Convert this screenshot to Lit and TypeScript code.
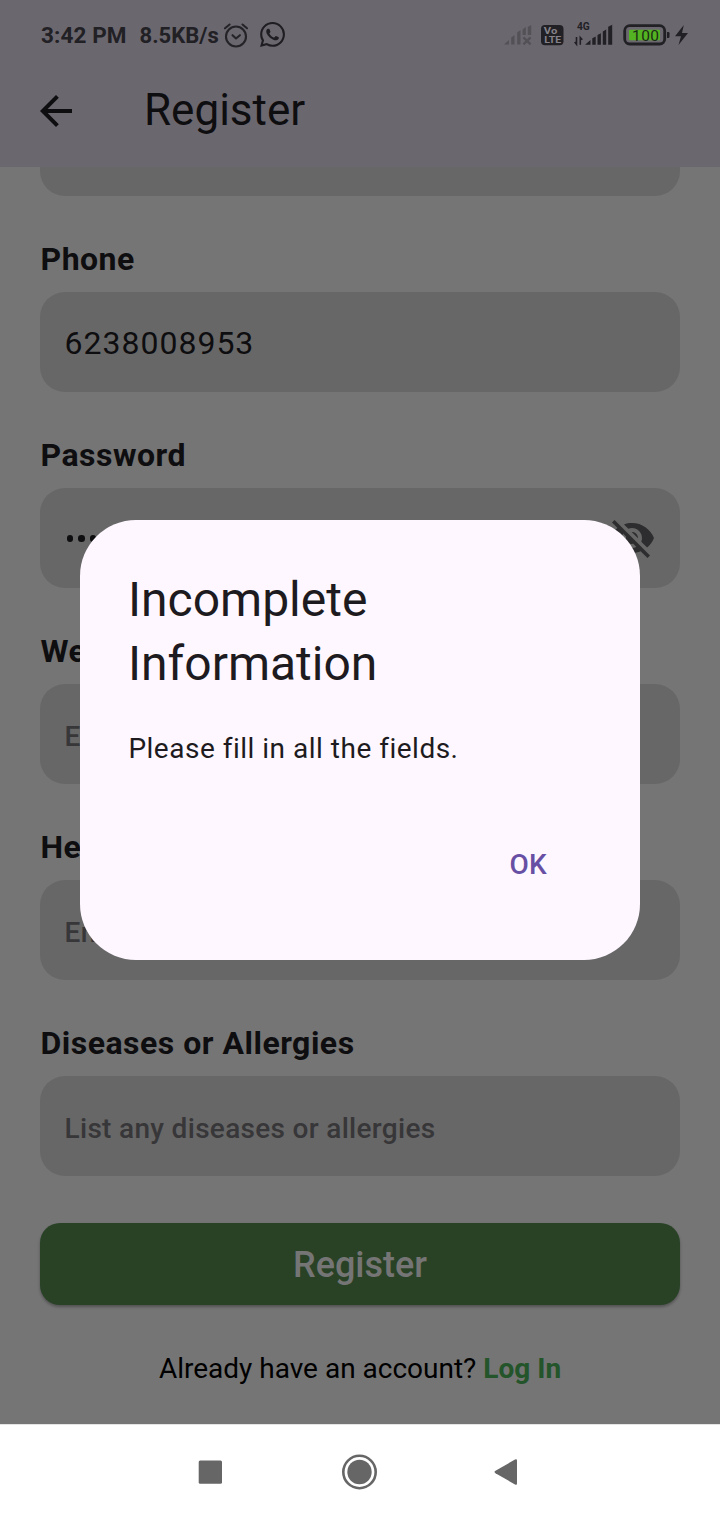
import { LitElement, html, css } from "lit";
import { customElement } from "lit/decorators.js";

@customElement("status-bar")
class StatusBar extends LitElement {
  static styles = css`
    :host { display: flex; height: 70px; box-sizing: border-box; color: #212024; font: 700 22.5px/26px Roboto, sans-serif; }
    .left { display: flex; align-items: center; padding-left: 41px; flex: 1; }
    .clock { letter-spacing: 0.1px; }
    .speed { margin: 1px 0 0 13px; font-size: 22px; }
    .alarm { margin-left: 4px; }
    .chat { margin: -1px 0 0 11px; }
    .right { display: flex; align-items: center; }
    svg { display: block; }
    .t { font-family: Roboto, sans-serif; font-weight: 700; }
  `;
  render() {
    return html`
      <div class="left">
        <span class="clock">3:42 PM</span><span class="speed">8.5KB/s</span>
        <svg class="alarm" width="26" height="26" viewBox="0 0 26 26" fill="none" stroke="#242327" stroke-width="2.1" stroke-linecap="round" stroke-linejoin="round">
          <circle cx="13" cy="14.5" r="10" /><path d="M9.500 13.200l3.500 3.300 3.900-3.300M2 6.300l4.600-3.800M19.500 2.500l4.500 3.800" />
        </svg>
        <svg class="chat" width="25" height="25" viewBox="0 0 24 24" fill="#1e1d21">
          <path d="M17.472 14.382c-.297-.149-1.758-.867-2.03-.967-.273-.099-.471-.148-.67.15-.197.297-.767.966-.94 1.164-.173.199-.347.223-.644.075-.297-.15-1.255-.463-2.39-1.475-.883-.788-1.48-1.761-1.653-2.059-.173-.297-.018-.458.13-.606.134-.133.298-.347.446-.52.149-.174.198-.298.298-.497.099-.198.05-.371-.025-.52-.075-.149-.669-1.612-.916-2.207-.242-.579-.487-.5-.669-.51-.173-.008-.371-.01-.57-.01-.198 0-.52.074-.792.372-.272.297-1.04 1.016-1.04 2.479 0 1.462 1.065 2.875 1.213 3.074.149.198 2.096 3.2 5.077 4.487.709.306 1.262.489 1.694.625.712.227 1.36.195 1.871.118.571-.085 1.758-.719 2.006-1.413.248-.694.248-1.289.173-1.413-.074-.124-.272-.198-.57-.347m-5.421 7.403h-.004a9.87 9.87 0 01-5.031-1.378l-.361-.214-3.741.982.998-3.648-.235-.374a9.86 9.86 0 01-1.51-5.26c.001-5.45 4.436-9.884 9.888-9.884 2.64 0 5.122 1.03 6.988 2.898a9.825 9.825 0 012.893 6.994c-.003 5.45-4.437 9.884-9.885 9.884m8.413-18.297A11.815 11.815 0 0012.05 0C5.495 0 .16 5.335.157 11.892c0 2.096.547 4.142 1.588 5.945L.057 24l6.305-1.654a11.882 11.882 0 005.683 1.448h.005c6.554 0 11.89-5.335 11.893-11.893a11.821 11.821 0 00-3.48-8.413z" />
        </svg>
      </div>
      <div class="right">
        <svg width="220" height="50" viewBox="0 0 220 50">
          <g fill="#535156">
            <path d="M14 34.500l5-4.500v4.500zM21.200 27.500l3.300-2.500v9.500h-3.300zM27.200 22.500l3.300-2.500v14.500h-3.300zM32.600 19.500l3.200-2.500v8h-3.200zM37.800 17l3.400-2v10h-3.400z" />
          </g>
          <path d="M33.400 27.400l7.200 7m0-7l-7.200 7" stroke="#535156" stroke-width="2.4" />
          <rect x="51" y="15" width="22.500" height="20.200" rx="4" fill="#212024" />
          <g class="t" fill="#85828a">
            <text x="53.800" y="24.300" font-size="9.500" textLength="13.500" lengthAdjust="spacingAndGlyphs">Vo</text>
            <text x="54.300" y="32.800" font-size="9" textLength="17" lengthAdjust="spacingAndGlyphs">LTE</text>
          </g>
          <g fill="#212024">
            <text class="t" x="87" y="20.200" font-size="10" textLength="12.800" lengthAdjust="spacingAndGlyphs">4G</text>
            <path d="M95 34.700l5.500-4.700v4.700zM102.300 28.200l3.400-1.800v8.300h-3.400zM107.500 25l3.400-1.800v11.500h-3.400zM112.800 21.600l3.400-2v15.100h-3.400zM118.200 16.800l4-2v19.900h-4z" />
          </g>
          <path d="M86.500 27v7.200l-1.800-2.200M90.300 34.700v-7.200l2 2.200" fill="none" stroke="#212024" stroke-width="1.600" />
          <rect x="134.700" y="15.700" width="40" height="18.300" rx="5" fill="none" stroke="#212024" stroke-width="2.800" />
          <path d="M177 22h1.300q1.200 0 1.200 1.200v3.600q0 1.200-1.200 1.200H177z" fill="#212024" />
          <rect x="139" y="19.800" width="31" height="10.400" rx="1" fill="#54b322" />
          <text x="142" y="30.500" font-family="Roboto, sans-serif" font-size="15.500" font-weight="400" fill="#1b2b16" textLength="27">100</text>
          <path d="M193.800 15l-8.800 11.200h6l-2.500 8.800 9.500-12h-6z" fill="#212024" />
        </svg>
      </div>
    `;
  }
}

@customElement("app-root")
class AppRoot extends LitElement {
  static styles = css`
    :host { display: block; width: 720px; height: 1520px; position: relative; overflow: hidden; font-family: Roboto, sans-serif; background: #757575; color: #0e0d0f; }
    * { box-sizing: border-box; }
    .page { display: flex; flex-direction: column; height: 1520px; }
    .top { height: 167px; flex: none; background: #6b676f; }
    .status { padding-right: 10px; }
    .bar { display: flex; align-items: center; height: 82px; padding-left: 40px; }
    .bar h1 { margin: -3px 0 0 72px; font-weight: 400; font-size: 44px; line-height: 56px; }
    .form { flex: 1; padding: 0 40px; display: flex; flex-direction: column; min-height: 0; }
    .field { height: 100px; flex: none; background: #676767; border-radius: 25px; display: flex; align-items: center; justify-content: space-between; padding: 2px 24px 0 24.500px; font-size: 32px; letter-spacing: 1px; }
    .cut { height: 29px; border-radius: 0 0 25px 25px; }
    .label { flex: none; margin: 44px 0 14px; padding-left: 0.500px; height: 38px; font-size: 32px; line-height: 38px; font-weight: 700; letter-spacing: 0.500px; }
    .hint { margin-top: 2px; font-size: 28px; font-weight: 500; letter-spacing: 0.310px; color: #373638; }
    .dots { display: flex; gap: 5.100px; padding-left: 2px; margin-top: -1px; }
    .dots i { width: 6.600px; height: 6.600px; border-radius: 50%; background: #0e0d0f; }
    .eye { display: block; margin-top: -2px; }
    .submit { flex: none; margin-top: 47px; height: 82px; padding: 2px 0 0; border: 0; border-radius: 20px; background: #294226; color: #757575; font: 500 36px/42px Roboto, sans-serif; box-shadow: 0 2px 3px rgba(0,0,0,.3); }
    .login { text-align: center; margin-top: 47px; font-size: 28px; line-height: 33px; color: #000; }
    .login b { color: #23542a; }
    .nav { flex: none; height: 96px; background: #fff; border-top: 1px solid #e4e4e4; display: flex; align-items: center; padding: 0 0 1px 198px; }
    .nav svg { display: block; }
    .dialog { position: absolute; left: 80px; top: 519.500px; width: 560px; height: 440px; border-radius: 56px; background: #fef7ff; padding: 48.500px 48px; color: #1d1b20; display: flex; flex-direction: column; }
    .dialog h2 { margin: 0; font-weight: 400; font-size: 48px; line-height: 64px; }
    .dialog p { margin: 33px 0 0; padding-left: 0.400px; font-size: 28px; line-height: 40px; letter-spacing: 0.500px; }
    .ok { align-self: flex-end; margin: 76px 45px 0 0; padding: 0; border: 0; background: none; color: #6750a4; font: 500 28px/40px Roboto, sans-serif; letter-spacing: 0.200px; }
  `;
  render() {
    return html`
      <div class="page">
        <header class="top">
          <status-bar class="status"></status-bar>
          <div class="bar">
            <svg width="32" height="32" viewBox="4 4 16 16" fill="#0e0d0f"><path d="M20 11H7.830l5.590-5.590L12 4l-8 8 8 8 1.410-1.410L7.830 13H20v-2z" /></svg>
            <h1>Register</h1>
          </div>
        </header>
        <main class="form">
          <div class="field cut"></div>
          <div class="label">Phone</div>
          <div class="field">6238008953</div>
          <div class="label">Password</div>
          <div class="field">
            <span class="dots">${[0, 1, 2, 3, 4, 5, 6, 7].map(() => html`<i></i>`)}</span>
            <svg class="eye" width="48" height="48" viewBox="0 0 24 24" fill="#2d2c2e"><path d="M12 7c2.760 0 5 2.240 5 5 0 .65-.13 1.260-.36 1.830l2.920 2.920c1.510-1.260 2.700-2.890 3.430-4.750-1.730-4.390-6-7.500-11-7.500-1.400 0-2.740.25-3.980.7l2.160 2.160C10.740 7.130 11.350 7 12 7zM2 4.270l2.280 2.280.46.46C3.080 8.300 1.780 10.020 1 12c1.730 4.390 6 7.500 11 7.500 1.550 0 3.030-.3 4.380-.84l.42.42L19.730 22 21 20.730 3.270 3 2 4.270zM7.530 9.800l1.550 1.550c-.05.21-.08.43-.08.65 0 1.660 1.340 3 3 3 .22 0 .44-.03.65-.08l1.550 1.550c-.67.33-1.410.53-2.200.53-2.760 0-5-2.240-5-5 0-.79.2-1.530.53-2.200zm4.310-.78l3.150 3.150.02-.16c0-1.660-1.340-3-3-3l-.17.01z" /></svg>
          </div>
          <div class="label">Weight</div>
          <div class="field"><span class="hint">Enter your weight</span></div>
          <div class="label">Height</div>
          <div class="field"><span class="hint">Enter your height</span></div>
          <div class="label">Diseases or Allergies</div>
          <div class="field"><span class="hint">List any diseases or allergies</span></div>
          <button class="submit">Register</button>
          <div class="login">Already have an account? <b>Log In</b></div>
        </main>
        <nav class="nav">
          <svg width="322" height="40" viewBox="0 0 322 40" fill="#666">
            <rect x="0.700" y="8.500" width="23.300" height="23.300" rx="1.500" />
            <circle cx="161.500" cy="20" r="12.200" /><circle cx="161.500" cy="20" r="16.200" fill="none" stroke="#666" stroke-width="2.600" />
            <path d="M319 8.500v23q0 2-2 1l-19.500-11.300q-2-1.200 0-2.400L317 7.500q2-1 2 1z" />
          </svg>
        </nav>
      </div>
      <section class="dialog" role="dialog">
        <h2>Incomplete<br />Information</h2>
        <p>Please fill in all the fields.</p>
        <button class="ok">OK</button>
      </section>
    `;
  }
}
